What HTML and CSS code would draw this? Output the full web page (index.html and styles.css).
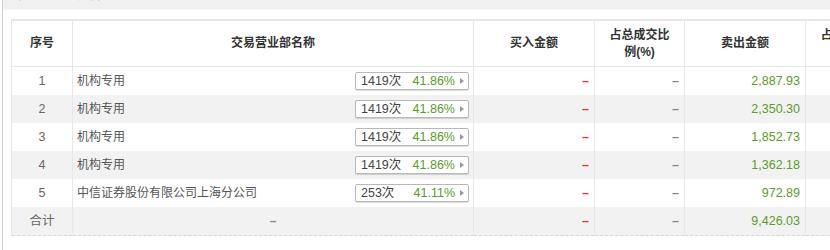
FILE: index.html
```html
<!DOCTYPE html>
<html lang="zh-CN">
<head>
<meta charset="utf-8">
<title>机构专用</title>
<link rel="stylesheet" href="styles.css">
</head>
<body>
<div class="panel">
  <div class="titlebar"><span class="title">机构席位买卖营业部统计</span></div>
  <div class="wrap">
    <table class="grid">
      <colgroup>
        <col class="c-no"><col class="c-name"><col class="c-amt"><col class="c-pct"><col class="c-amt"><col class="c-pct">
      </colgroup>
      <thead>
        <tr>
          <th>序号</th>
          <th>交易营业部名称</th>
          <th>买入金额</th>
          <th>占总成交比例(%)</th>
          <th>卖出金额</th>
          <th>占总成交比例(%)</th>
        </tr>
      </thead>
      <tbody>
        <tr>
          <td class="no">1</td>
          <td class="name"><div class="namecell"><span>机构专用</span><span class="badge"><span class="cnt">1419次</span><span class="rate">41.86%</span><i class="tri"></i></span></div></td>
          <td class="num red">–</td><td class="num gray">–</td><td class="num green">2,887.93</td><td></td>
        </tr>
        <tr class="alt">
          <td class="no">2</td>
          <td class="name"><div class="namecell"><span>机构专用</span><span class="badge"><span class="cnt">1419次</span><span class="rate">41.86%</span><i class="tri"></i></span></div></td>
          <td class="num red">–</td><td class="num gray">–</td><td class="num green">2,350.30</td><td></td>
        </tr>
        <tr>
          <td class="no">3</td>
          <td class="name"><div class="namecell"><span>机构专用</span><span class="badge"><span class="cnt">1419次</span><span class="rate">41.86%</span><i class="tri"></i></span></div></td>
          <td class="num red">–</td><td class="num gray">–</td><td class="num green">1,852.73</td><td></td>
        </tr>
        <tr class="alt">
          <td class="no">4</td>
          <td class="name"><div class="namecell"><span>机构专用</span><span class="badge"><span class="cnt">1419次</span><span class="rate">41.86%</span><i class="tri"></i></span></div></td>
          <td class="num red">–</td><td class="num gray">–</td><td class="num green">1,362.18</td><td></td>
        </tr>
        <tr>
          <td class="no">5</td>
          <td class="name"><div class="namecell"><span>中信证券股份有限公司上海分公司</span><span class="badge"><span class="cnt">253次</span><span class="rate">41.11%</span><i class="tri"></i></span></div></td>
          <td class="num red">–</td><td class="num gray">–</td><td class="num green">972.89</td><td></td>
        </tr>
        <tr class="alt total">
          <td class="no">合计</td>
          <td class="center gray">–</td>
          <td class="num red">–</td><td class="num gray">–</td><td class="num green">9,426.03</td><td></td>
        </tr>
      </tbody>
    </table>
  </div>
</div>
</body>
</html>
```
FILE: styles.css
```css
html, body {
  margin: 0;
  padding: 0;
  background: #fff;
  overflow: hidden;
}
body {
  font-family: "Liberation Sans", "Noto Sans CJK SC", sans-serif;
  font-size: 12px;
  color: #555;
  width: 830px;
  height: 250px;
}
.panel {
  margin-left: 2px;
  border-left: 1px solid #cfcfcf;
  height: 250px;
}
.titlebar {
  height: 9px;
  background: #f0f0f0;
  border-bottom: 1px solid #f7f7f7;
  overflow: hidden;
  padding-left: 14px;
}
.title {
  display: block;
  margin-top: -12px;
  line-height: 14px;
  font-size: 12px;
  font-weight: bold;
  color: #777;
}
.wrap {
  padding: 9px 0 0 8px;
  width: 1000px;
}
.grid {
  border-collapse: collapse;
  table-layout: fixed;
  width: 884px;
}
.c-no { width: 61px; }
.c-name { width: 401px; }
.c-amt { width: 121px; }
.c-pct { width: 90px; }
.grid th {
  height: 45px;
  padding: 0 11px;
  font-weight: bold;
  font-size: 12px;
  color: #333;
  line-height: 17px;
  text-align: center;
  border-top: 2px solid #e6e6e6;
  border-left: 1px solid #e8e8e8;
  border-bottom: 1px solid #e6e6e6;
  background: #fff;
}
.grid td {
  height: 28px;
  padding: 0 5px;
  line-height: 16px;
  border-left: 1px solid #e8e8e8;
  white-space: nowrap;
}
.grid tr.alt td { background: #f2f2f2; }
.grid tr.total td { border-bottom: 1px dashed #d6d6d6; }
.grid td.no { text-align: center; color: #666; font-size: 12.5px; }
.grid td.name { padding: 0 4px 0 4px; color: #555; }
.grid td.center { text-align: center; }
.grid td.num { text-align: right; font-size: 12.5px; }
.grid td.red { color: #ff3030; font-weight: bold; }
.grid td.gray { color: #888; font-weight: bold; }
.grid td.green { color: #5b9b2c; }
.namecell {
  display: flex;
  align-items: center;
  justify-content: space-between;
}
.badge {
  display: flex;
  align-items: center;
  height: 16px;
  line-height: 16px;
  width: 107px;
  border: 1px solid #b9b9b9;
  border-radius: 2px;
  box-shadow: 0 1px 1px rgba(0, 0, 0, 0.15);
  background: #fff;
  padding-left: 5px;
}
.cnt { color: #444; font-size: 12.5px; }
.rate { color: #5b9b2c; margin-left: auto; font-size: 12.5px; }
.tri {
  display: block;
  width: 0;
  height: 0;
  border-left: 4px solid #9a9a9a;
  border-top: 3px solid transparent;
  border-bottom: 3px solid transparent;
  margin: 0 4px 0 5px;
}
```
